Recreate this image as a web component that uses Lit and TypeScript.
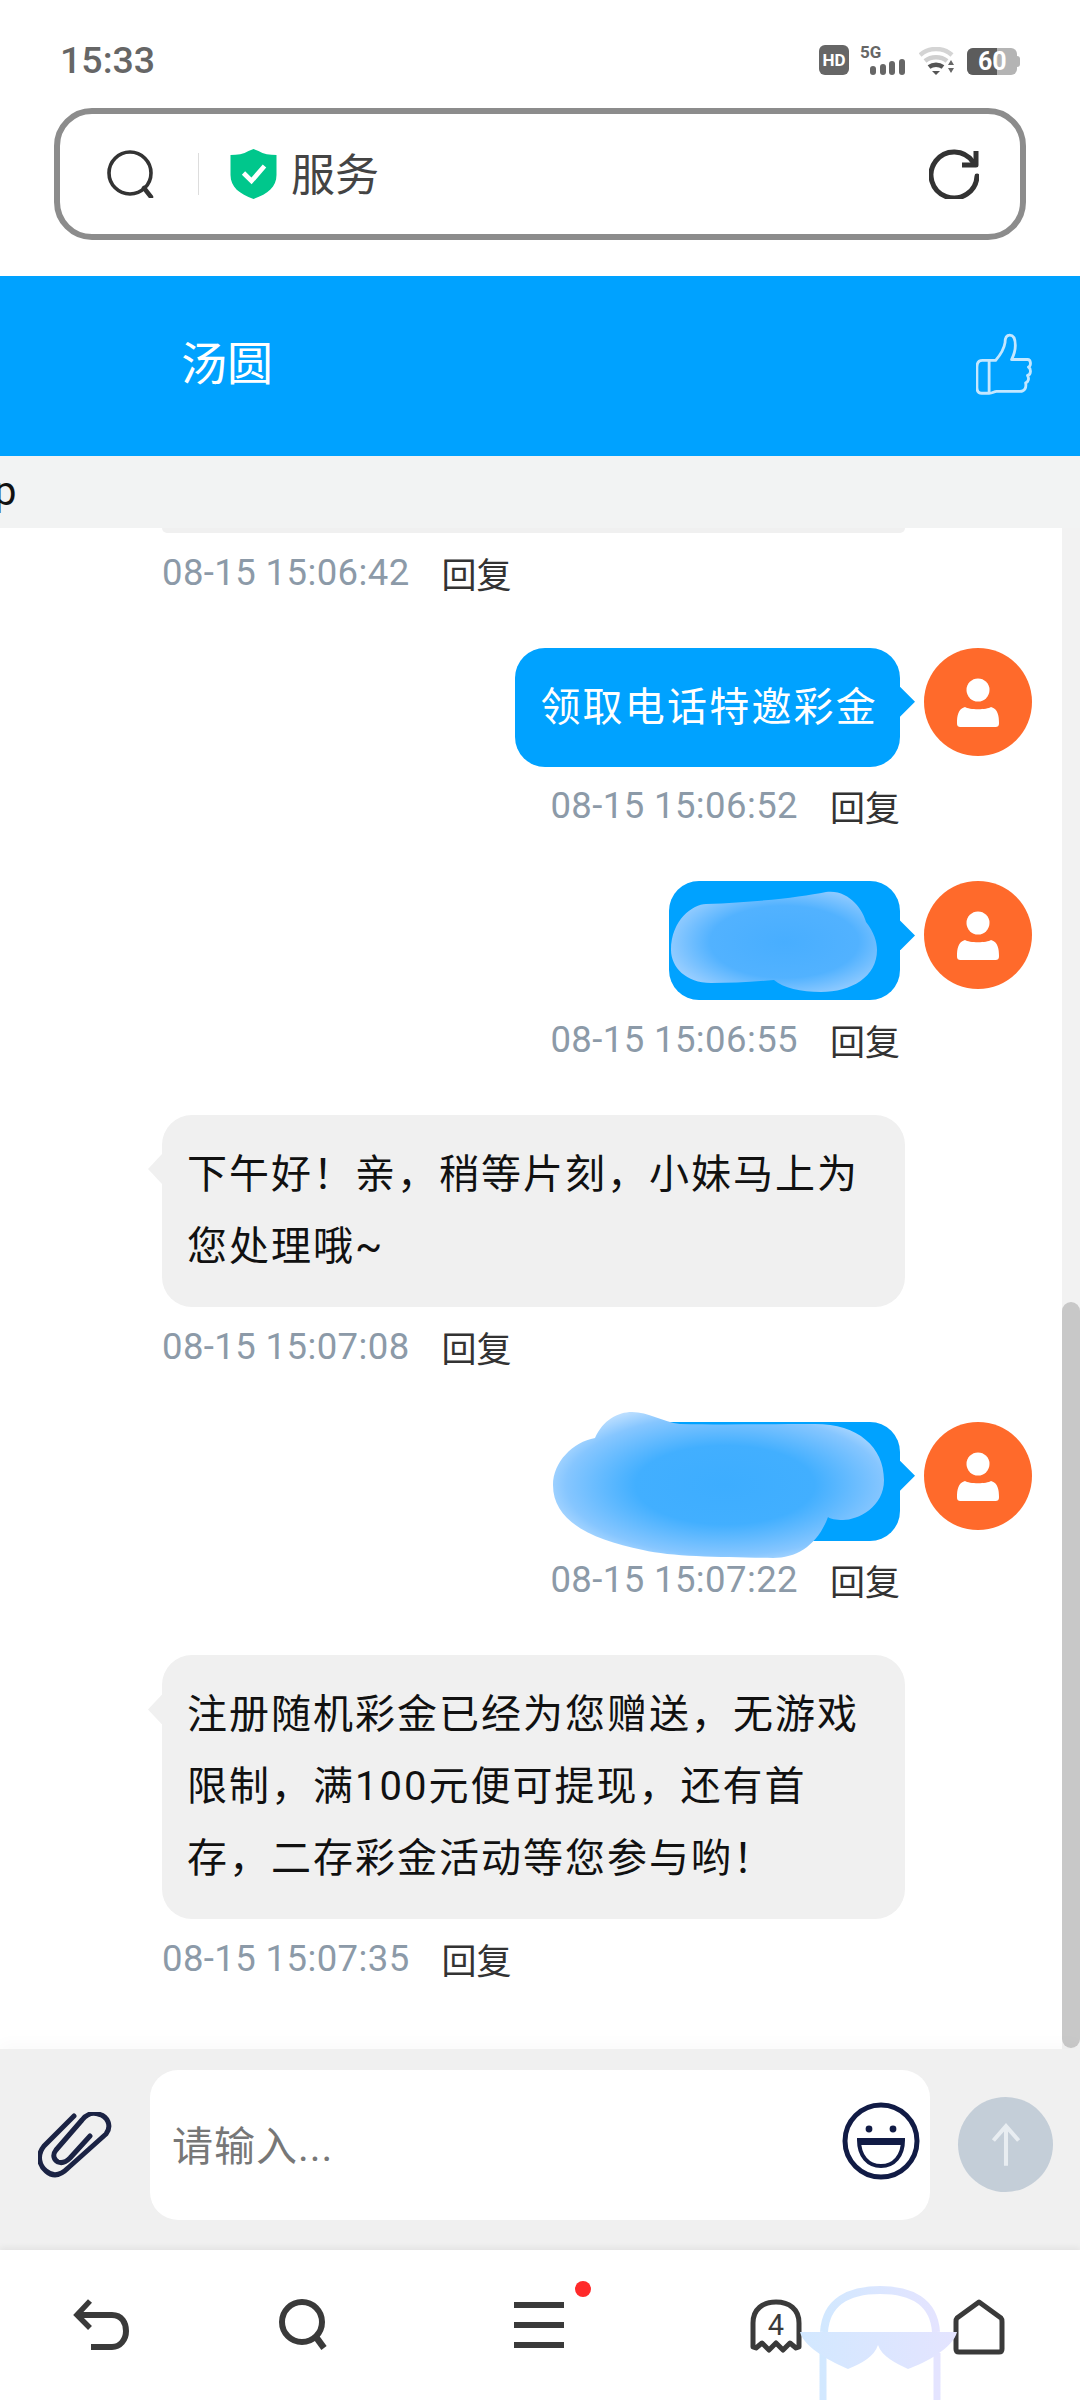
import { LitElement, html, css, svg } from 'lit'
import { customElement } from 'lit/decorators.js'

type Msg = {
  side: 'left' | 'right'
  time: string
  lines?: string[]
  blob?: 'small' | 'large'
}

const messages: Msg[] = [
  { side: 'right', time: '08-15 15:06:52', lines: ['领取电话特邀彩金'] },
  { side: 'right', time: '08-15 15:06:55', blob: 'small' },
  { side: 'left', time: '08-15 15:07:08', lines: ['下午好！亲，稍等片刻，小妹马上为', '您处理哦~'] },
  { side: 'right', time: '08-15 15:07:22', blob: 'large' },
  { side: 'left', time: '08-15 15:07:35', lines: ['注册随机彩金已经为您赠送，无游戏', '限制，满100元便可提现，还有首', '存，二存彩金活动等您参与哟！'] },
]

const avatar = html`
  <svg class="avatar" viewBox="0 0 108 108">
    <circle cx="54" cy="54" r="54" fill="#ff6a2b"/>
    <circle cx="54" cy="42" r="11.5" fill="#fff"/>
    <path d="M41 59c4 3 22 3 26 0 7 2 8 9 8 16 0 3-1 4-4 4H37c-3 0-4-1-4-4 0-7 1-14 8-16z" fill="#fff"/>
  </svg>
`

const blobSmall = svg`
  <svg class="blob small" viewBox="-1 -2 208 104">
    <defs>
      <radialGradient id="bs" cx=".55" cy=".5" r=".6">
        <stop offset="0" stop-color="#48aeff"/>
        <stop offset=".6" stop-color="#52b2ff"/>
        <stop offset="1" stop-color="#9ed0ff"/>
      </radialGradient>
    </defs>
    <path fill="url(#bs)" d="M0 58C0 28 22 12 35 12 90 10 130 5 155 0c23-3 37 18 40 30 8 10 11 20 11 28 0 27-26 42-56 42-20 0-38-4-47-12-23 2-43 3-63 3C15 91 0 75 0 58z"/>
  </svg>
`

const blobLarge = svg`
  <svg class="blob large" viewBox="0 0 331 146">
    <defs>
      <radialGradient id="bl" cx=".52" cy=".5" r=".6">
        <stop offset="0" stop-color="#3dadff"/>
        <stop offset=".45" stop-color="#42afff"/>
        <stop offset=".8" stop-color="#86c6ff"/>
        <stop offset="1" stop-color="#c8e4ff"/>
      </radialGradient>
    </defs>
    <path fill="url(#bl)" d="M0 73C0 50 20 30 42 26 50 8 65 0 79 0c16 0 31 10 48 12 43 1 93 0 135 0 43 0 69 23 69 56 0 27-26 40-41 40-7 0-13-1-15-3-10 27-30 41-55 41-50-1-100-1-130-8C40 128 0 110 0 73z"/>
  </svg>
`

@customElement('app-root')
export class AppRoot extends LitElement {
  renderMessage(m: Msg) {
    const bubbleClass = `bubble ${m.blob ?? ''}`
    return html`
      <div class="msg ${m.side}">
        <div class="row">
          <div class=${bubbleClass}>
            <span class="tail"></span>
            ${m.lines ? m.lines.map((l, i) => html`${i ? html`<br>` : ''}${l}`) : ''}
            ${m.blob === 'small' ? blobSmall : ''}
            ${m.blob === 'large' ? blobLarge : ''}
          </div>
          ${m.side === 'right' ? avatar : ''}
        </div>
        <div class="meta"><span class="time">${m.time}</span><span class="reply">回复</span></div>
      </div>
    `
  }

  render() {
    return html`
      <div class="status">
        <span class="clock">15:33</span>
        <div class="status-icons">
          <span class="hd">HD</span>
          <div class="net">
            <span class="five-g">5G</span>
            <svg class="bars" viewBox="0 0 35 16">
              <rect x="0" y="7" width="6" height="9" rx="3" fill="#666"/>
              <rect x="10" y="5" width="6" height="11" rx="3" fill="#666"/>
              <rect x="19" y="2" width="6" height="14" rx="3" fill="#666"/>
              <rect x="29" y="0" width="6" height="16" rx="3" fill="#666"/>
            </svg>
          </div>
          <svg class="wifi" viewBox="0 0 37 28">
            <path d="M1 8C10 0 24 0 33 8" fill="none" stroke="#d4d4d4" stroke-width="4.5"/>
            <path d="M6 14c6-5 16-5 22 0" fill="none" stroke="#cfcfcf" stroke-width="4.5"/>
            <path d="M10 20c4-3 10-3 14 0" fill="none" stroke="#555" stroke-width="4.5"/>
            <path d="M13 24h8l-4 4z" fill="#555"/>
            <path d="M32 13l-3 5h6zM29 21h6l-3 5z" fill="#666"/>
          </svg>
          <div class="battery"><span class="level"></span><span class="pct">60</span><span class="nub"></span></div>
        </div>
      </div>

      <div class="search-wrap">
        <div class="search">
          <svg class="s-icon" viewBox="0 0 48 48">
            <circle cx="23" cy="23" r="21" fill="none" stroke="#333" stroke-width="3.6"/>
            <path d="M37 38l7 9" fill="none" stroke="#333" stroke-width="4.5" stroke-linecap="round"/>
          </svg>
          <span class="sep"></span>
          <svg class="shield" viewBox="0 0 46 50">
            <path d="M23 0l5 2c5 3 11 4 18 4v20c0 12-9 19-23 24C9 45 0 38 0 26V6c7 0 13-1 18-4z" fill="#00c78c"/>
            <path d="M13 24l8 8 13-15" fill="none" stroke="#fff" stroke-width="4.6"/>
          </svg>
          <span class="domain">服务</span>
          <svg class="reload" viewBox="0 0 50 50">
            <path d="M44 13A23 23 0 1 0 48 27" fill="none" stroke="#333" stroke-width="5" stroke-linecap="round"/>
            <path d="M47 2v14H33" fill="none" stroke="#333" stroke-width="5" stroke-linejoin="round"/>
          </svg>
        </div>
      </div>

      <header class="head">
        <span class="title">汤圆</span>
        <svg class="thumb" viewBox="0 0 63 70">
          <path d="M14 28h7c5-6 9-12 10-19 0-4 1-8 5-8 5 0 6 6 6 11 0 6-2 11-4 15h17c4 0 4 7 1 8 3 2 3 8-1 9 2 3 1 7-2 8 1 5-1 9-6 9H22c-3 0-4 2-8 2H6c-3 0-5-2-5-6V35c0-4 2-7 6-7zM14 28v35" fill="none" stroke="#c4e7ff" stroke-width="3" stroke-linejoin="round"/>
        </svg>
      </header>

      <div class="band"><span class="clip">p</span></div>

      <div class="chat">
        <div class="list">
          <div class="msg left">
            <div class="sliver"></div>
            <div class="meta"><span class="time">08-15 15:06:42</span><span class="reply">回复</span></div>
          </div>
          ${messages.map((m) => this.renderMessage(m))}
        </div>
        <div class="track"><div class="thumb-bar"></div></div>
      </div>

      <div class="composer">
        <svg class="clipicon" viewBox="0 0 74 66">
          <path d="M36 4L6 34C-2 44 2 54 8 59c8 7 16 3 22-3L68 22c6-8 2-18-8-20-6-2-12 1-16 6L18 38c-4 5-2 10 2 12 5 2 9-1 12-4l20-22" fill="none" stroke="#1b2344" stroke-width="5" stroke-linecap="round" stroke-linejoin="round"/>
        </svg>
        <div class="input">
          <span class="placeholder">请输入...</span>
          <svg class="smile" viewBox="0 0 78 78">
            <circle cx="39" cy="39" r="36" fill="none" stroke="#111b45" stroke-width="5"/>
            <circle cx="27" cy="27" r="3.4" fill="#111b45"/>
            <circle cx="51" cy="27" r="3.4" fill="#111b45"/>
            <path d="M17 38h44c0 16-9 26-22 26S17 54 17 38z" fill="none" stroke="#111b45" stroke-width="4"/>
            <path d="M17 38h44v5H17z" fill="#111b45"/>
          </svg>
        </div>
        <button class="send" aria-label="send">
          <svg viewBox="0 0 40 50"><path d="M20 48V4M6 20L20 4l14 16" fill="none" stroke="#e8edf1" stroke-width="4.5"/></svg>
        </button>
      </div>

      <nav class="nav">
        <svg class="n back" viewBox="0 0 60 52">
          <path d="M18 2L5 16l13 13" fill="none" stroke="#3a3a3a" stroke-width="5.5"/>
          <path d="M5 16h35c10 0 14 8 14 16 0 9-6 16-14 16H19" fill="none" stroke="#3a3a3a" stroke-width="6"/>
        </svg>
        <svg class="n find" viewBox="0 0 60 52">
          <circle cx="29" cy="23" r="20" fill="none" stroke="#3a3a3a" stroke-width="6"/>
          <path d="M43 38l8 11" fill="none" stroke="#3a3a3a" stroke-width="6.5"/>
        </svg>
        <div class="n menu"><i></i><i></i><i></i><b></b></div>
        <div class="n tabs">
          <svg viewBox="0 0 60 56">
            <path d="M7 48V24C7 10 17 3 30 3s23 7 23 21v24l-3 1-6-5-7 7-7-7-7 7-7-7-6 5z" fill="none" stroke="#3a3a3a" stroke-width="5" stroke-linejoin="round"/>
          </svg>
          <span>4</span>
        </div>
        <svg class="n home" viewBox="0 0 60 56">
          <path d="M30 3L8 19c-1 1-1 2-1 4v27c0 2 1 3 3 3h40c2 0 3-1 3-3V23c0-2 0-3-1-4z" fill="none" stroke="#3a3a3a" stroke-width="5" stroke-linejoin="round"/>
        </svg>
        <svg class="mascot" viewBox="0 0 160 117">
          <defs>
            <linearGradient id="mg" x1="0" x2="1">
              <stop offset="0" stop-color="#d2e8ff"/>
              <stop offset="1" stop-color="#e4e4ff"/>
            </linearGradient>
          </defs>
          <path d="M24 49C26 18 50 7 80 7s54 11 56 42" fill="none" stroke="url(#mg)" stroke-width="8"/>
          <path d="M23 70v47M137 70v47" fill="none" stroke="url(#mg)" stroke-width="7"/>
          <path d="M0 49h157c-4 16-32 31-49 37-12-6-26-12-30-24-4 12-16 18-30 24C34 80 4 65 0 49z" fill="url(#mg)"/>
        </svg>
      </nav>
    `
  }

  static styles = css`
    :host {
      display: flex;
      flex-direction: column;
      width: 1080px;
      height: 2400px;
      overflow: hidden;
      background: #fff;
      font-family: Roboto, "Noto Sans CJK SC", sans-serif;
      color: #111;
    }

    .status {
      flex: none;
      height: 108px;
      padding: 45px 60px 0 60px;
      box-sizing: border-box;
      display: flex;
      justify-content: space-between;
      align-items: flex-start;
    }
    .clock {
      font-size: 37.5px;
      line-height: 30px;
      font-weight: 500;
      color: #666;
    }
    .status-icons {
      display: flex;
      align-items: flex-start;
      gap: 11px;
      margin-right: 3px;
    }
    .hd {
      width: 30px;
      height: 30px;
      border-radius: 6px;
      background: #666;
      color: #fff;
      font-size: 17px;
      font-weight: 700;
      line-height: 30px;
      text-align: center;
    }
    .net { width: 46px; height: 30px; display: flex; flex-direction: column; }
    .five-g {
      font-size: 17px;
      line-height: 14px;
      font-weight: 700;
      color: #666;
    }
    .bars { width: 35px; height: 16px; margin-left: 10px; }
    .wifi { width: 37px; height: 28px; margin-left: 2px; margin-top: 2px; }
    .battery {
      position: relative;
      width: 50px;
      height: 27px;
      margin-top: 3px;
      border-radius: 6px;
      background: #b4b4b4;
    }
    .level {
      position: absolute;
      left: 0;
      top: 0;
      bottom: 0;
      width: 30px;
      background: #5c5c5c;
      border-radius: 6px 0 0 6px;
    }
    .pct {
      position: absolute;
      left: 11px;
      top: 0;
      font-size: 25px;
      line-height: 27px;
      font-weight: 700;
      color: #fff;
    }
    .nub {
      position: absolute;
      right: -3px;
      top: 8px;
      width: 3px;
      height: 11px;
      border-radius: 0 3px 3px 0;
      background: #b4b4b4;
    }

    .search-wrap { flex: none; height: 168px; padding: 0 54px; box-sizing: border-box; }
    .search {
      height: 132px;
      box-sizing: border-box;
      border: 6px solid #8c8c8c;
      border-radius: 38px;
      display: flex;
      align-items: center;
      padding-left: 47px;
      padding-right: 41px;
    }
    .s-icon { width: 48px; height: 48px; flex: none; }
    .sep { width: 1px; height: 42px; background: #ddd; margin-left: 43px; flex: none; }
    .shield { width: 47px; height: 50px; margin-left: 31px; flex: none; }
    .domain { font-size: 44px; color: #444; margin: 4px 0 0 14px; line-height: 1; }
    .reload { width: 50px; height: 50px; margin-left: auto; flex: none; }

    .head {
      flex: none;
      height: 180px;
      background: #00a2ff;
      display: flex;
      align-items: center;
      justify-content: space-between;
      padding: 0 45px 0 181px;
    }
    .title { font-size: 46px; color: #fff; line-height: 1; margin-top: -4px; }
    .thumb { width: 59px; height: 68px; margin-top: 2px; }

    .band {
      flex: none;
      height: 72px;
      background: #f2f3f3;
      display: flex;
      align-items: center;
      overflow: hidden;
    }
    .clip { font-size: 40px; margin-left: -6px; color: #111; line-height: 1; }

    .chat { flex: 1; min-height: 0; display: flex; overflow: hidden; }
    .list { flex: 1; min-width: 0; display: flex; flex-direction: column; gap: 50.7px; }
    .track { flex: none; width: 18px; background: #f2f2f2; }
    .thumb-bar {
      width: 18px;
      height: 746px;
      margin-top: 774px;
      background: #c8c8c8;
      border-radius: 9px;
    }

    .msg { display: flex; flex-direction: column; }
    .msg.left { align-items: flex-start; padding-left: 162px; }
    .msg.right { align-items: flex-end; padding-right: 30px; }
    .row { display: flex; align-items: flex-start; gap: 24px; }
    .sliver {
      width: 743px;
      height: 5px;
      background: #f0f0f0;
      border-radius: 0 0 18px 18px;
    }

    .bubble {
      position: relative;
      box-sizing: border-box;
      border-radius: 30px;
      padding: 24px 22px 24px 25px;
      font-size: 40px;
      letter-spacing: 2.2px;
      line-height: 72px;
    }
    .left .bubble { width: 743px; background: #f0f0f0; color: #111; letter-spacing: 2px; }
    .right .bubble { background: #00a2ff; color: #fff; line-height: 71px; height: 119px; }
    .bubble.small { width: 231px; }
    .bubble.large { width: 270px; }
    .tail {
      position: absolute;
      top: 39px;
      width: 15px;
      height: 30px;
    }
    .right .tail {
      right: -15px;
      background: #00a2ff;
      clip-path: polygon(0 0, 100% 50%, 0 100%);
    }
    .left .tail {
      left: -14px;
      width: 14px;
      background: #f0f0f0;
      clip-path: polygon(100% 0, 0 50%, 100% 100%);
    }
    .blob { position: absolute; }
    .blob.small { left: 1px; top: 9px; width: 208px; height: 104px; }
    .blob.large { left: -77px; top: -10px; width: 331px; height: 146px; }

    .avatar { width: 108px; height: 108px; flex: none; }

    .meta {
      display: flex;
      align-items: center;
      height: 50px;
      margin-top: 14px;
    }
    .msg.right .meta { margin-right: 132px; }
    .time { font-size: 36.5px; color: #8c9aa8; letter-spacing: .4px; }
    .reply { font-size: 35px; color: #333; margin-left: 32px; }

    .composer {
      flex: none;
      position: relative;
      height: 201px;
      background: #f0f0f0;
      box-shadow: 0 -6px 14px rgba(0, 0, 0, .025);
      display: flex;
      align-items: flex-start;
    }
    .clipicon { width: 74px; height: 66px; margin: 63px 0 0 38px; flex: none; }
    .input {
      width: 780px;
      height: 150px;
      margin: 21px 0 0 38px;
      background: #fff;
      border-radius: 28px;
      display: flex;
      align-items: center;
      justify-content: space-between;
      padding: 0 10px 0 22px;
      box-sizing: border-box;
      flex: none;
    }
    .placeholder { font-size: 41px; letter-spacing: 1px; color: #777; margin-top: -4px; }
    .smile { width: 78px; height: 78px; margin-top: -8px; }
    .send {
      width: 95px;
      height: 95px;
      margin: 48px 0 0 28px;
      border: 0;
      padding: 0;
      border-radius: 50%;
      background: #c4ced8;
      display: flex;
      align-items: center;
      justify-content: center;
    }
    .send svg { width: 36px; height: 48px; }

    .nav {
      flex: none;
      position: relative;
      height: 150px;
      background: #fff;
      box-shadow: 0 -3px 6px rgba(0, 0, 0, .05);
      display: flex;
      align-items: flex-start;
      padding-left: 72px;
      padding-top: 49px;
      box-sizing: border-box;
    }
    .n { flex: none; width: 60px; height: 52px; }
    .find { margin-left: 141px; }
    .menu {
      margin-left: 176px;
      position: relative;
      display: flex;
      flex-direction: column;
      gap: 14px;
      padding: 3px 5px;
      box-sizing: border-box;
    }
    .menu i { display: block; height: 6px; background: #3a3a3a; }
    .menu b {
      position: absolute;
      left: 66px;
      top: -18px;
      width: 16px;
      height: 16px;
      border-radius: 50%;
      background: #ff2a2a;
    }
    .tabs { margin-left: 177px; position: relative; height: 56px; }
    .tabs svg { width: 60px; height: 56px; display: block; }
    .tabs span {
      position: absolute;
      left: 0;
      right: 0;
      top: 12px;
      text-align: center;
      font-size: 29px;
      line-height: 28px;
      color: #3a3a3a;
    }
    .home { margin-left: 143px; height: 56px; }
    .mascot {
      position: absolute;
      left: 800px;
      top: 33px;
      width: 160px;
      height: 117px;
    }
  `
}
